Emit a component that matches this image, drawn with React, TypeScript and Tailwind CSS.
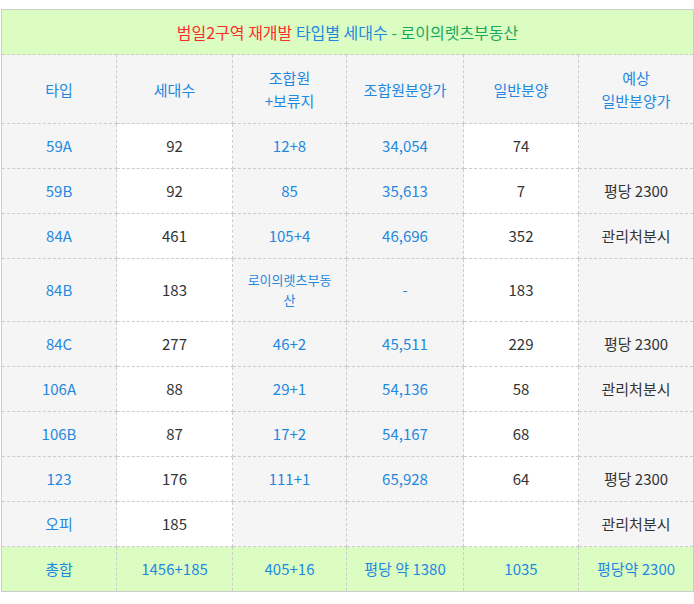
import React from "react";

const BLUE = "text-[#1f88e0]";
const DARK = "text-[#333333]";

type Row = {
  type: string;
  units: string;
  members: React.ReactNode;
  memberPrice: string;
  general: string;
  expected: string;
  tall?: boolean;
};

const rows: Row[] = [
  { type: "59A", units: "92", members: "12+8", memberPrice: "34,054", general: "74", expected: "" },
  { type: "59B", units: "92", members: "85", memberPrice: "35,613", general: "7", expected: "평당 2300" },
  { type: "84A", units: "461", members: "105+4", memberPrice: "46,696", general: "352", expected: "관리처분시" },
  {
    type: "84B",
    units: "183",
    members: <span className="text-[13px] leading-[20px] block">로이의렛츠부동산</span>,
    memberPrice: "-",
    general: "183",
    expected: "",
    tall: true,
  },
  { type: "84C", units: "277", members: "46+2", memberPrice: "45,511", general: "229", expected: "평당 2300" },
  { type: "106A", units: "88", members: "29+1", memberPrice: "54,136", general: "58", expected: "관리처분시" },
  { type: "106B", units: "87", members: "17+2", memberPrice: "54,167", general: "68", expected: "" },
  { type: "123", units: "176", members: "111+1", memberPrice: "65,928", general: "64", expected: "평당 2300" },
  { type: "오피", units: "185", members: "", memberPrice: "", general: "", expected: "관리처분시" },
];

const cell = "border border-dashed border-[#cccccc] text-center align-middle px-[10px] font-normal";

export default function App() {
  return (
    <div className="bg-white w-[694px] h-[604px] pt-[9px] px-[1px] font-['Noto_Sans_CJK_KR','Noto_Sans',sans-serif] text-[15px]">
      <table className="w-[692px] table-fixed border-collapse border border-[#cccccc]">
        <colgroup>
          <col className="w-[115px]" />
          <col className="w-[116px]" />
          <col className="w-[114px]" />
          <col className="w-[117px]" />
          <col className="w-[115px]" />
          <col className="w-[115px]" />
        </colgroup>
        <thead>
          <tr className="h-[45px] bg-[#dbfdc2]">
            <th colSpan={6} className={`${cell} text-[16px]`}>
              <span className="text-[#ff2a2a]">범일2구역 재개발 </span>
              <span className="text-[#1f88e0]">타입별 세대수 </span>
              <span className="text-[#1aa85a]">- 로이의렛츠부동산</span>
            </th>
          </tr>
          <tr className="h-[69px] bg-[#f5f5f5] leading-[23px]">
            <th className={`${cell} ${BLUE}`}>타입</th>
            <th className={`${cell} ${BLUE}`}>세대수</th>
            <th className={`${cell} ${BLUE}`}>
              조합원
              <br />
              +보류지
            </th>
            <th className={`${cell} ${BLUE}`}>조합원분양가</th>
            <th className={`${cell} ${BLUE}`}>일반분양</th>
            <th className={`${cell} ${BLUE}`}>
              예상
              <br />
              일반분양가
            </th>
          </tr>
        </thead>
        <tbody>
          {rows.map((r) => (
            <tr key={r.type} className={r.tall ? "h-[63px]" : "h-[45px]"}>
              <td className={`${cell} bg-[#f5f5f5] ${BLUE}`}>{r.type}</td>
              <td className={`${cell} bg-white ${DARK}`}>{r.units}</td>
              <td className={`${cell} bg-[#f5f5f5] ${BLUE}`}>{r.members}</td>
              <td className={`${cell} bg-[#f5f5f5] ${BLUE}`}>{r.memberPrice}</td>
              <td className={`${cell} bg-white ${DARK}`}>{r.general}</td>
              <td className={`${cell} bg-[#f5f5f5] ${DARK}`}>{r.expected}</td>
            </tr>
          ))}
          <tr className={`h-[45px] bg-[#dbfdc2] ${BLUE}`}>
            <td className={cell}>총합</td>
            <td className={cell}>1456+185</td>
            <td className={cell}>405+16</td>
            <td className={cell}>평당 약 1380</td>
            <td className={cell}>1035</td>
            <td className={cell}>평당약 2300</td>
          </tr>
        </tbody>
      </table>
    </div>
  );
}
